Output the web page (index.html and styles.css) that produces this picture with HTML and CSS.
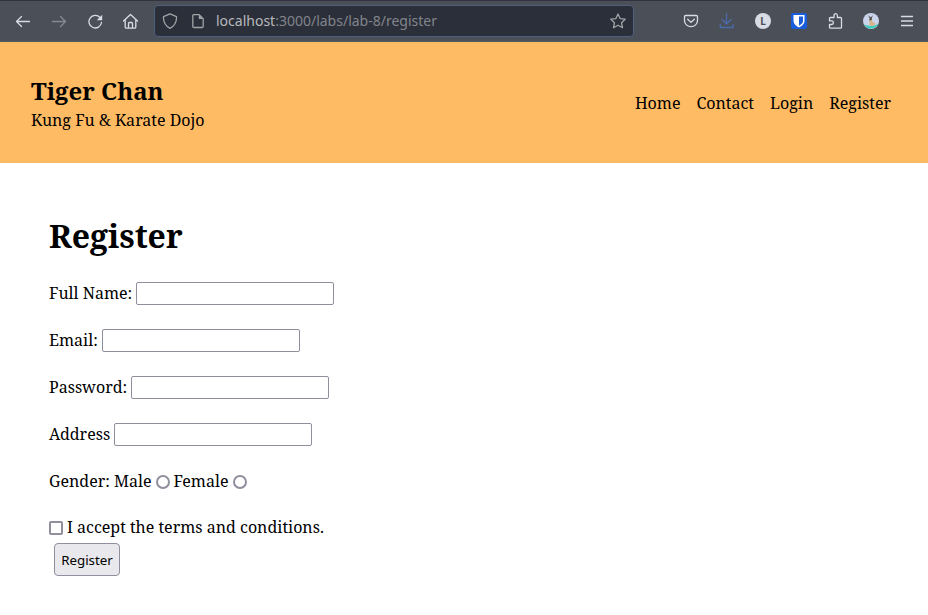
FILE: index.html
```html
<!DOCTYPE html>
<html lang="en">
<head>
<meta charset="utf-8">
<title>Register</title>
<link rel="stylesheet" href="styles.css">
</head>
<body>
<div class="toolbar">
  <svg class="icon back" viewBox="0 0 16 16"><path d="M14.5 8.5H1.5M6.5 3.5L1.5 8.5L6.5 13.5"/></svg>
  <svg class="icon forward" viewBox="0 0 16 16"><path d="M1.5 8.5H14.5M9.5 3.5L14.5 8.5L9.5 13.5"/></svg>
  <svg class="icon reload" viewBox="0 0 16 16"><path d="M13 4.5A6.3 6.3 0 1 0 14.5 9.5"/><path class="solid" d="M15.2 1.8V7.2H9.8Z"/></svg>
  <svg class="icon home" viewBox="0 0 16 16"><path d="M.5 8L7.5 1.5L14.5 8M2.2 6.8V14Q2.2 15.2 3.4 15.2H11.6Q12.8 15.2 12.8 14V6.8M5.5 15V10.5Q5.5 9.5 6.5 9.5H8.5Q9.5 9.5 9.5 10.5V15"/></svg>
  <div class="urlbar">
    <svg class="icon shield" viewBox="0 0 16 16"><path d="M8 .8L14.5 3.6C14.8 9 12.5 13 8 15.4C3.5 13 1.2 9 1.5 3.6Z"/></svg>
    <svg class="icon page" viewBox="0 0 16 16"><path d="M3.7 1.6H9.2L13.2 5.6V13.3Q13.2 14.5 12 14.5H4Q2.8 14.5 2.8 13.3V2.6Q2.8 1.6 3.7 1.6Z"/><path class="solid" d="M8.8 1.5V6H13.3Z"/></svg>
    <span class="url"><span class="host">localhost</span>:3000/labs/lab-8/register</span>
    <svg class="icon star" viewBox="0 0 16 16"><path d="M8 1L10.1 5.6L15.2 6.2L11.5 9.7L12.5 14.7L8 12.2L3.5 14.7L4.5 9.7L.8 6.2L5.9 5.6Z"/></svg>
  </div>
  <div class="tools">
    <svg class="icon" viewBox="0 0 16 16"><path d="M2.8 2.5H13.2Q14.5 2.5 14.5 3.8V7.5A6.5 6.2 0 0 1 1.5 7.5V3.8Q1.5 2.5 2.8 2.5ZM4.7 6.2L8 9.4L11.3 6.2"/></svg>
    <svg class="icon download" viewBox="0 0 16 16"><path d="M7.5 .6V11M3 6.5L7.5 11L12 6.5M1.3 11.5V14.5H14V11.5"/></svg>
    <span class="account">L</span>
    <svg class="icon" viewBox="0 0 16 16"><rect class="vault" width="16" height="16" rx="2"/><path class="vault-shield" d="M2.5 2H13.5V8C13.5 11 11 13 8 14.5C5 13 2.5 11 2.5 8Z"/><path class="vault-half" d="M8 3.5H12V8C12 10 10 11.7 8 12.8Z"/></svg>
    <svg class="icon" viewBox="0 0 16 16"><path d="M2.5 7.8V5.5Q2.5 4.5 3.5 4.5H7V2.6A1.7 1.9 0 0 1 10.4 2.6V4.5H13.5Q14.5 4.5 14.5 5.5V14.2Q14.5 15.2 13.5 15.2H3.5Q2.5 15.2 2.5 14.2V11.5H4.6A1.8 1.8 0 0 0 4.6 7.9H2.5Z"/></svg>
    <svg class="icon avatar" viewBox="0 0 16 16"><circle class="sky" cx="8" cy="8" r="8"/><path class="sea" d="M1 11.5Q8 14.5 15.2 11A8 8 0 0 1 1 11.5Z"/><path class="body" d="M6.3 6H9L9.2 8.5L12.5 10.5L11.5 12.8H6.5Z"/><path class="ears" d="M4.8 2L6.7 5L6.5 7.5L8.5 7L8.8 5L10 2L7.8 4.5Z"/></svg>
    <svg class="icon menu" viewBox="0 0 16 16"><path d="M2 3.5H14M2 8H14M2 12.5H14"/></svg>
  </div>
</div>
<header class="site-header">
  <div>
    <h2 class="brand">Tiger Chan</h2>
    <div class="tagline">Kung Fu &amp; Karate Dojo</div>
  </div>
  <nav class="nav"><a>Home</a><a>Contact</a><a>Login</a><a>Register</a></nav>
</header>
<main>
  <h1 class="title">Register</h1>
  <form>
    <label class="row"><span>Full Name:</span><input class="field" type="text"></label>
    <label class="row"><span>Email:</span><input class="field" type="text"></label>
    <label class="row"><span>Password:</span><input class="field" type="password"></label>
    <label class="row"><span>Address</span><input class="field" type="text"></label>
    <div class="row gender"><span>Gender: Male</span><input class="radio" type="radio" name="gender"><span>Female</span><input class="radio" type="radio" name="gender"></div>
    <label class="row terms"><input class="check" type="checkbox"><span>I accept the terms and conditions.</span></label>
    <button class="submit" type="button">Register</button>
  </form>
</main>
</body>
</html>
```
FILE: styles.css
```css
* { box-sizing: border-box; }
body { margin: 0; background: #fff; color: #000; font: 16px/22px "Noto Serif", "Droid Serif", "DejaVu Serif Condensed", "DejaVu Serif", serif; }
h1, h2 { margin: 0; }
.toolbar { height: 42px; display: flex; align-items: center; padding: 0 13px 0 15px; background: #4b4f58; border-top: 1px solid #30333e; border-bottom: 1px solid #555963; }
.icon { width: 16px; height: 16px; flex: none; fill: none; stroke: #d8dce5; stroke-width: 1.3; stroke-linecap: round; stroke-linejoin: round; }
.icon .solid { fill: #d8dce5; stroke: none; }
.forward { margin-left: 20px; stroke: #858992; }
.reload { margin-left: 20px; }
.home { margin-left: 20px; }
.urlbar { width: 480px; height: 32px; margin-left: 15px; padding: 0 7px; display: flex; align-items: center; background: #2b2f3a; border: 1px solid #4f5f7e; border-radius: 4px; }
.urlbar .icon { stroke: #a1a2a5; }
.urlbar .solid { fill: #a1a2a5; }
.page { margin-left: 12px; }
.url { flex: 1; margin-left: 10px; color: #82858b; font: 14px/20px "Noto Sans", sans-serif; }
.host { color: #b7b8bb; }
.tools { margin-left: auto; display: flex; gap: 20px; }
.icon.download { stroke: #4a6caa; }
.account { width: 16px; height: 16px; border-radius: 50%; background: #d8dce5; color: #4b4f58; font: bold 10px/16px "Noto Sans", sans-serif; text-align: center; }
.icon .vault { fill: #175ddc; stroke: none; }
.icon .vault-shield { fill: #fff; stroke: none; }
.icon .vault-half { fill: #175ddc; stroke: none; }
.sky { fill: #cad4ea; stroke: none; }
.sea { fill: #3bcdbd; stroke: none; }
.body { fill: #d4b48b; stroke: none; }
.ears { fill: #44413f; stroke: none; }
.menu { stroke-linecap: butt; }
.site-header { height: 121px; padding: 0 37px 0 31px; display: flex; align-items: center; justify-content: space-between; background: #ffbb64; }
.brand { font-size: 24px; line-height: 33px; }
.tagline { padding-top: 2px; }
.nav { display: flex; gap: 16px; }
main { padding: 51px 49px 0; }
.title { font-size: 32px; line-height: 44px; margin-bottom: 24px; }
.row { display: flex; align-items: center; gap: 4px; height: 23px; margin-bottom: 24px; }
.row span { padding-bottom: 2px; }
.field { width: 198px; height: 23px; margin: 0; padding: 1px 2px; border: 1px solid #8f8f9d; border-radius: 2px; background: #fff; }
.radio, .check { appearance: none; width: 14px; height: 14px; margin: 1px 0 0; border: 2px solid #8f8f9d; background: #fff; }
.radio { border-radius: 50%; }
.check { border-radius: 2px; }
.gender { margin-bottom: 23px; }
.terms { margin-bottom: 4px; }
.submit { display: block; width: 66px; height: 33px; margin: 0 0 0 5px; padding: 0; border: 1px solid #8f8f9d; border-radius: 4px; background: #e9e9ed; color: #000; font: 13.333px "Noto Sans", sans-serif; }
```
